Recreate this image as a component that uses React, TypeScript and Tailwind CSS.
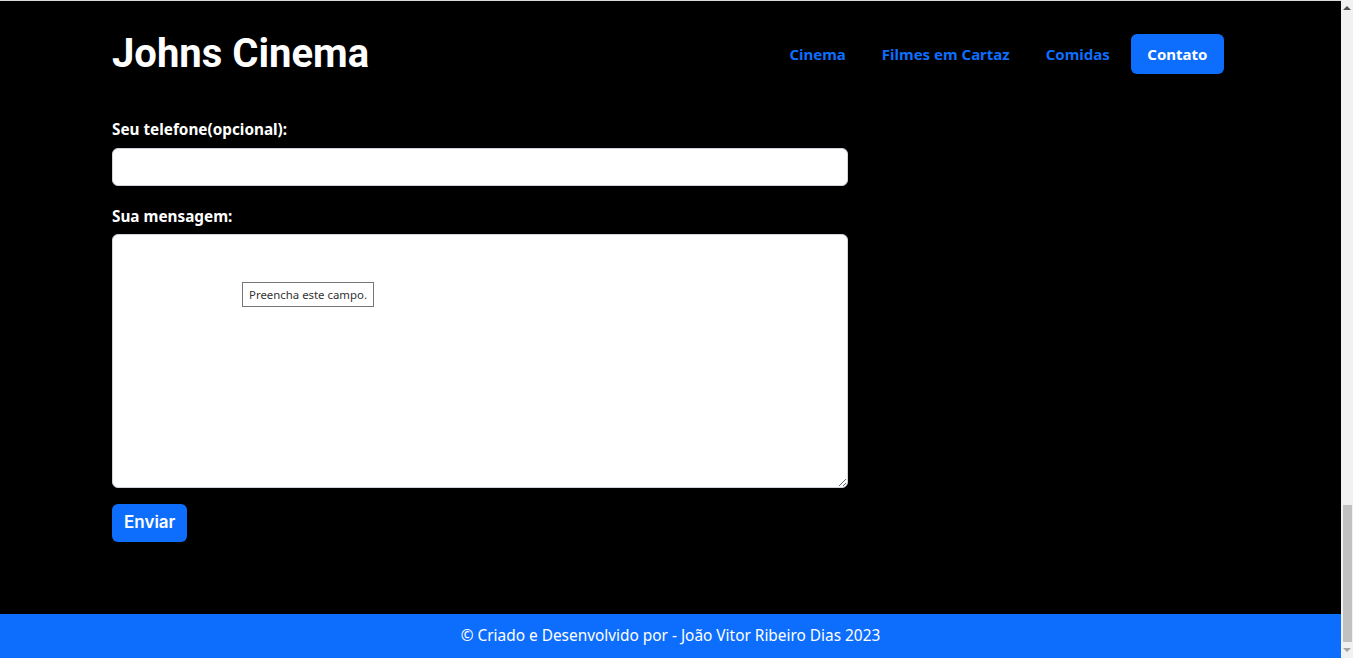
import { useState } from 'react'

const NAV = ['Cinema', 'Filmes em Cartaz', 'Comidas']

export default function App() {
  const [form, setForm] = useState({ telefone: '', mensagem: '' })

  return (
    <div className="flex h-[658px] w-full overflow-hidden bg-black">
      <div className="flex min-w-0 flex-1 flex-col border-t border-[#d9d9d9]">
        {/* Header */}
        <header className="flex h-[107px] items-center justify-between pb-[1px] pl-[112px] pr-[117px]">
          <h1 className="font-['Roboto',sans-serif] text-[40px] font-bold leading-none text-white">Johns Cinema</h1>
          <nav className="flex items-center font-['Noto_Sans',sans-serif] text-[15px] font-bold">
            {NAV.map(item => (
              <a key={item} href="#" className="px-[18px] py-2 text-[#0d6efd]">{item}</a>
            ))}
            <a href="#" className="ml-[3px] flex h-10 items-center rounded-md bg-[#0d6efd] px-[16.5px] text-white">Contato</a>
          </nav>
        </header>

        {/* Form */}
        <form className="flex-1 pl-[112px] pt-2 font-['Noto_Sans',sans-serif]" onSubmit={e => e.preventDefault()}>
          <div className="w-[736px]">
            <label className="mb-2 block h-6 pt-[1px] text-[15.3px] font-bold leading-6 text-white">Seu telefone(opcional):</label>
            <input
              className="mb-[17px] block h-[38px] w-full rounded-md border border-[#ced4da] bg-white px-3 outline-none"
              value={form.telefone}
              onChange={e => setForm(f => ({ ...f, telefone: e.target.value }))}
            />
            <label className="mb-[7px] block h-6 pt-[1px] text-[15.3px] font-bold leading-6 text-white">Sua mensagem:</label>
            <div className="relative">
              <textarea
                className="block h-[254px] w-full rounded-md border border-[#ced4da] bg-white px-3 py-2 outline-none"
                value={form.mensagem}
                onChange={e => setForm(f => ({ ...f, mensagem: e.target.value }))}
              />
              {/* browser validation bubble */}
              <div className="absolute left-[130px] top-[48px] flex h-[25px] w-[132px] items-center justify-center border border-[#767676] bg-white text-[11.4px] text-[#333]">
                Preencha este campo.
              </div>
            </div>
            <button type="submit" className="mt-4 h-[38px] rounded-md bg-[#0d6efd] px-3 font-['Inter',sans-serif] text-[17px] font-semibold text-white">
              Enviar
            </button>
          </div>
        </form>

        {/* Footer */}
        <footer className="flex h-[44px] items-center justify-center bg-[#0d6efd] font-['Noto_Sans',sans-serif] text-[15.4px] text-white">
          © Criado e Desenvolvido por - João Vitor Ribeiro Dias 2023
        </footer>
      </div>

      {/* scrollbar */}
      <div className="flex w-[12px] flex-col items-center bg-[#f1f1f1]">
        <div className="mt-[6px] h-0 w-0 border-x-[4px] border-b-[4px] border-x-transparent border-b-[#505050]" />
        <div className="flex-1" />
        <div className="h-[137px] w-[9px] bg-[#c1c1c1]" />
        <div className="my-[6px] h-0 w-0 border-x-[4px] border-t-[4px] border-x-transparent border-t-[#a3a3a3]" />
      </div>
    </div>
  )
}
